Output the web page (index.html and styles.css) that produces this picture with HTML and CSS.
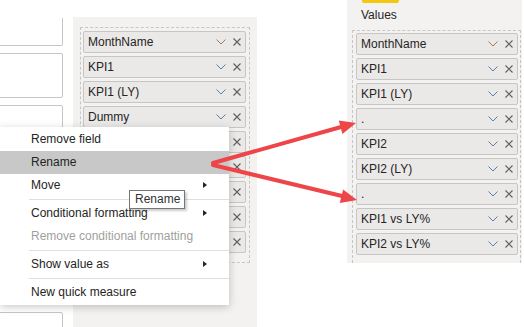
FILE: index.html
```html
<!DOCTYPE html>
<html lang="en">
<head>
    <meta charset="UTF-8">
    <meta name="viewport" content="width=device-width, initial-scale=1.0">
    <title>Fields - Rename</title>
    <link rel="stylesheet" href="styles.css">
</head>
<body>
    <div class="canvas">
        <div class="workspace">
            <div class="slots">
                <div class="slot slot-first"></div>
                <div class="slot slot-tall"></div>
                <div class="slot slot-tall"></div>
                <div class="slot slot-last"></div>
            </div>

            <div class="pane pane-left">
                <div class="well">
                    <div class="field"><span class="name">MonthName</span><svg class="chev chev-warm" width="10" height="6" viewBox="0 0 10 6"><path d="M0.5 0.5 L5 5 L9.5 0.5"/></svg><svg class="close" width="8" height="8" viewBox="0 0 8 8"><path d="M0.5 0.5 L7.5 7.5 M7.5 0.5 L0.5 7.5"/></svg></div>
                    <div class="field"><span class="name">KPI1</span><svg class="chev" width="10" height="6" viewBox="0 0 10 6"><path d="M0.5 0.5 L5 5 L9.5 0.5"/></svg><svg class="close" width="8" height="8" viewBox="0 0 8 8"><path d="M0.5 0.5 L7.5 7.5 M7.5 0.5 L0.5 7.5"/></svg></div>
                    <div class="field"><span class="name">KPI1 (LY)</span><svg class="chev" width="10" height="6" viewBox="0 0 10 6"><path d="M0.5 0.5 L5 5 L9.5 0.5"/></svg><svg class="close" width="8" height="8" viewBox="0 0 8 8"><path d="M0.5 0.5 L7.5 7.5 M7.5 0.5 L0.5 7.5"/></svg></div>
                    <div class="field"><span class="name">Dummy</span><svg class="chev" width="10" height="6" viewBox="0 0 10 6"><path d="M0.5 0.5 L5 5 L9.5 0.5"/></svg><svg class="close" width="8" height="8" viewBox="0 0 8 8"><path d="M0.5 0.5 L7.5 7.5 M7.5 0.5 L0.5 7.5"/></svg></div>
                    <!-- rows below sit under the open menu; only their close buttons show -->
                    <div class="field"><span class="name"></span><svg class="chev" width="10" height="6" viewBox="0 0 10 6"><path d="M0.5 0.5 L5 5 L9.5 0.5"/></svg><svg class="close" width="8" height="8" viewBox="0 0 8 8"><path d="M0.5 0.5 L7.5 7.5 M7.5 0.5 L0.5 7.5"/></svg></div>
                    <div class="field"><span class="name"></span><svg class="chev" width="10" height="6" viewBox="0 0 10 6"><path d="M0.5 0.5 L5 5 L9.5 0.5"/></svg><svg class="close" width="8" height="8" viewBox="0 0 8 8"><path d="M0.5 0.5 L7.5 7.5 M7.5 0.5 L0.5 7.5"/></svg></div>
                    <div class="field"><span class="name"></span><svg class="chev" width="10" height="6" viewBox="0 0 10 6"><path d="M0.5 0.5 L5 5 L9.5 0.5"/></svg><svg class="close" width="8" height="8" viewBox="0 0 8 8"><path d="M0.5 0.5 L7.5 7.5 M7.5 0.5 L0.5 7.5"/></svg></div>
                    <div class="field"><span class="name"></span><svg class="chev" width="10" height="6" viewBox="0 0 10 6"><path d="M0.5 0.5 L5 5 L9.5 0.5"/></svg><svg class="close" width="8" height="8" viewBox="0 0 8 8"><path d="M0.5 0.5 L7.5 7.5 M7.5 0.5 L0.5 7.5"/></svg></div>
                    <div class="field"><span class="name"></span><svg class="chev" width="10" height="6" viewBox="0 0 10 6"><path d="M0.5 0.5 L5 5 L9.5 0.5"/></svg><svg class="close" width="8" height="8" viewBox="0 0 8 8"><path d="M0.5 0.5 L7.5 7.5 M7.5 0.5 L0.5 7.5"/></svg></div>
                </div>
                <div class="section-title">Cross-report</div>
            </div>

            <div class="pane pane-right">
                <div class="accent"></div>
                <div class="label">Values</div>
                <div class="well well-open">
                    <div class="field"><span class="name">MonthName</span><svg class="chev chev-warm" width="10" height="6" viewBox="0 0 10 6"><path d="M0.5 0.5 L5 5 L9.5 0.5"/></svg><svg class="close" width="8" height="8" viewBox="0 0 8 8"><path d="M0.5 0.5 L7.5 7.5 M7.5 0.5 L0.5 7.5"/></svg></div>
                    <div class="field"><span class="name">KPI1</span><svg class="chev" width="10" height="6" viewBox="0 0 10 6"><path d="M0.5 0.5 L5 5 L9.5 0.5"/></svg><svg class="close" width="8" height="8" viewBox="0 0 8 8"><path d="M0.5 0.5 L7.5 7.5 M7.5 0.5 L0.5 7.5"/></svg></div>
                    <div class="field"><span class="name">KPI1 (LY)</span><svg class="chev" width="10" height="6" viewBox="0 0 10 6"><path d="M0.5 0.5 L5 5 L9.5 0.5"/></svg><svg class="close" width="8" height="8" viewBox="0 0 8 8"><path d="M0.5 0.5 L7.5 7.5 M7.5 0.5 L0.5 7.5"/></svg></div>
                    <div class="field"><span class="name">.</span><svg class="chev" width="10" height="6" viewBox="0 0 10 6"><path d="M0.5 0.5 L5 5 L9.5 0.5"/></svg><svg class="close" width="8" height="8" viewBox="0 0 8 8"><path d="M0.5 0.5 L7.5 7.5 M7.5 0.5 L0.5 7.5"/></svg></div>
                    <div class="field"><span class="name">KPI2</span><svg class="chev" width="10" height="6" viewBox="0 0 10 6"><path d="M0.5 0.5 L5 5 L9.5 0.5"/></svg><svg class="close" width="8" height="8" viewBox="0 0 8 8"><path d="M0.5 0.5 L7.5 7.5 M7.5 0.5 L0.5 7.5"/></svg></div>
                    <div class="field"><span class="name">KPI2 (LY)</span><svg class="chev" width="10" height="6" viewBox="0 0 10 6"><path d="M0.5 0.5 L5 5 L9.5 0.5"/></svg><svg class="close" width="8" height="8" viewBox="0 0 8 8"><path d="M0.5 0.5 L7.5 7.5 M7.5 0.5 L0.5 7.5"/></svg></div>
                    <div class="field"><span class="name">.</span><svg class="chev" width="10" height="6" viewBox="0 0 10 6"><path d="M0.5 0.5 L5 5 L9.5 0.5"/></svg><svg class="close" width="8" height="8" viewBox="0 0 8 8"><path d="M0.5 0.5 L7.5 7.5 M7.5 0.5 L0.5 7.5"/></svg></div>
                    <div class="field"><span class="name">KPI1 vs LY%</span><svg class="chev" width="10" height="6" viewBox="0 0 10 6"><path d="M0.5 0.5 L5 5 L9.5 0.5"/></svg><svg class="close" width="8" height="8" viewBox="0 0 8 8"><path d="M0.5 0.5 L7.5 7.5 M7.5 0.5 L0.5 7.5"/></svg></div>
                    <div class="field"><span class="name">KPI2 vs LY%</span><svg class="chev" width="10" height="6" viewBox="0 0 10 6"><path d="M0.5 0.5 L5 5 L9.5 0.5"/></svg><svg class="close" width="8" height="8" viewBox="0 0 8 8"><path d="M0.5 0.5 L7.5 7.5 M7.5 0.5 L0.5 7.5"/></svg></div>
                </div>
            </div>
        </div>

        <!-- context menu opened on the Dummy field -->
        <div class="menu">
            <div class="menu-item">Remove field</div>
            <div class="menu-item menu-item-active">Rename</div>
            <div class="menu-item has-sub">Move</div>
            <div class="menu-sep"></div>
            <div class="menu-item has-sub">Conditional formatting</div>
            <div class="menu-item menu-item-disabled">Remove conditional formatting</div>
            <div class="menu-sep"></div>
            <div class="menu-item has-sub">Show value as</div>
            <div class="menu-sep"></div>
            <div class="menu-item">New quick measure</div>
        </div>

        <div class="tip">Rename</div>

        <svg class="arrows" width="524" height="327" viewBox="0 0 524 327">
            <line x1="213" y1="163" x2="341" y2="127"/>
            <polygon points="356,123 342.4,134 338.8,120.4"/>
            <line x1="213" y1="165" x2="342" y2="196"/>
            <polygon points="357,200 339.8,203 343.1,189.4"/>
        </svg>
    </div>
</body>
</html>
```

FILE: styles.css
```css
* {
    box-sizing: border-box;
    margin: 0;
    padding: 0;
}

body {
    background-color: #fff;
    color: #252423;
    font-family: 'Segoe UI', 'Liberation Sans', Arial, sans-serif;
    font-size: 12px;
    overflow: hidden;
}

.canvas {
    position: relative;
    width: 524px;
    height: 327px;
    overflow: hidden;
}

.workspace {
    display: flex;
    align-items: flex-start;
    height: 327px;
}

/* left column of empty slots */
.slots {
    display: flex;
    flex-direction: column;
    flex: none;
    width: 73px;
    margin-left: -10px;
}

.slot {
    border: 1px solid #c8c6c4;
    border-radius: 2px;
    background-color: #fff;
}

.slot-first {
    margin-top: 17px;
    height: 29px;
    border-top-color: transparent;
}

.slot-tall {
    margin-top: 7px;
    height: 45px;
}

.slot-last {
    margin-top: 162px;
    height: 30px;
}

.pane {
    background-color: #f3f2f1;
    flex: none;
}

.pane-left {
    margin-left: 10px;
    margin-top: 17px;
    width: 184px;
    height: 310px;
    padding: 10px 7px 0 7px;
}

.pane-right {
    margin-left: 90px;
    width: 175px;
    height: 263px;
    padding: 0 1px 0 5px;
    display: flex;
    flex-direction: column;
}

.accent {
    width: 37px;
    height: 3px;
    margin-left: 10px;
    background-color: #f2c811;
    border-radius: 0 0 2px 2px;
}

.label {
    line-height: 16px;
    margin: 4px 0 7px 9px;
}

.well {
    border: 1px dashed #c8c6c4;
    padding: 3px 3px 9px 2px;
    display: flex;
    flex-direction: column;
    gap: 3px;
}

.well-open {
    flex: 1;
    border-bottom: none;
    padding: 2px 2px 0 3px;
}

.field {
    display: flex;
    align-items: center;
    height: 22px;
    padding: 0 4px 0 4px;
    background-color: #eae9e8;
    border: 1px solid #c8c6c4;
    border-radius: 2px;
}

.name {
    flex: 1;
    white-space: nowrap;
    overflow: hidden;
}

.chev {
    fill: none;
    stroke: #5f7ea6;
    stroke-width: 1;
    margin-right: 7px;
}

.chev-warm {
    stroke: #a07a58;
}

.close {
    fill: none;
    stroke: #605e5c;
    stroke-width: 1.1;
}

.section-title {
    margin: 9px 0 0 5px;
    line-height: 14px;
}

/* context menu */
.menu {
    position: absolute;
    left: 0;
    top: 127px;
    width: 229px;
    padding: 1px 0;
    background-color: #fff;
    box-shadow: 0 2px 8px rgba(0, 0, 0, 0.22);
}

.menu-item {
    position: relative;
    height: 23px;
    line-height: 23px;
    padding-left: 31px;
    white-space: nowrap;
}

.menu-item-active {
    background-color: #c8c8c8;
}

.menu-item-disabled {
    color: #a19f9d;
}

.has-sub::after {
    content: '';
    position: absolute;
    left: 203px;
    top: 8px;
    border-left: 4px solid #252423;
    border-top: 3.5px solid transparent;
    border-bottom: 3.5px solid transparent;
}

.menu-sep {
    height: 1px;
    margin: 2px 0 2px 29px;
    background-color: #e1dfdd;
}

.tip {
    position: absolute;
    left: 129px;
    top: 190px;
    width: 56px;
    height: 19px;
    line-height: 17px;
    padding-left: 5px;
    background-color: #fff;
    border: 1px solid #767676;
    box-shadow: 2px 2px 2px rgba(0, 0, 0, 0.2);
    color: #333;
}

.arrows {
    position: absolute;
    left: 0;
    top: 0;
    pointer-events: none;
}

.arrows line {
    stroke: #ee4548;
    stroke-width: 4;
    stroke-linecap: round;
}

.arrows polygon {
    fill: #ee4548;
}
```
